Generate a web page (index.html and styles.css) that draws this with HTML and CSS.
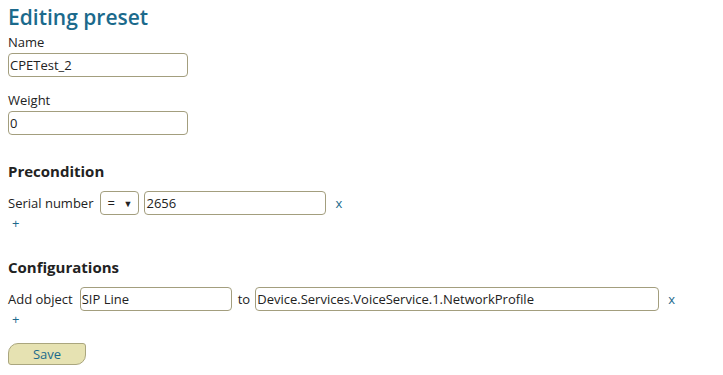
FILE: index.html
```html
<!DOCTYPE html>
<html lang="en">
  <head>
    <meta charset="UTF-8" />
    <title>Editing preset</title>
    <link rel="stylesheet" href="styles.css">
  </head>
  <body>
    <h1>Editing preset</h1>
    <form class="preset-form">
      <label class="field-label first" for="name">Name</label>
      <input class="text-input" id="name" type="text" value="CPETest_2" />
      <label class="field-label" for="weight">Weight</label>
      <input class="text-input" id="weight" type="text" value="0" />

      <h2>Precondition</h2>
      <div class="row">
        <span>Serial number</span>
        <span class="op-select">= <span class="caret">&#9660;</span></span>
        <input class="text-input value-input" type="text" value="2656" />
        <a class="remove">x</a>
      </div>
      <a class="add">+</a>

      <h2>Configurations</h2>
      <div class="row">
        <span>Add object</span>
        <input class="text-input object-input" type="text" value="SIP Line" />
        <span class="to">to</span>
        <input class="text-input path-input" type="text" value="Device.Services.VoiceService.1.NetworkProfile" />
        <a class="remove">x</a>
      </div>
      <a class="add">+</a>

      <button class="save" type="button">Save</button>
    </form>
  </body>
</html>
```

FILE: styles.css
```css
body {
  margin: 8px;
  font-family: "Open Sans", "Noto Sans", sans-serif;
  font-size: 13px;
  color: #222;
}

h1 {
  margin: 0;
  font-size: 21px;
  font-weight: 600;
  color: #1b6a8c;
  line-height: 18px;
}

h2 {
  margin: 26px 0 10px;
  font-size: 15px;
  font-weight: 700;
  line-height: 20px;
}

.preset-form {
  display: flex;
  flex-direction: column;
  align-items: flex-start;
}

.field-label {
  margin: 14px 0 2px;
  line-height: 18px;
}

.field-label.first {
  margin-top: 7px;
}

.text-input {
  box-sizing: border-box;
  width: 180px;
  height: 24px;
  margin: 0;
  padding: 0 1px;
  font: inherit;
  color: #222;
  border: 1px solid #a39e7e;
  border-radius: 4px;
}

.row {
  display: flex;
  align-items: center;
}

.op-select {
  box-sizing: border-box;
  width: 39px;
  height: 24px;
  margin-left: 7px;
  border: 1px solid #a39e7e;
  border-radius: 4px;
  padding: 0 6px;
  display: flex;
  align-items: center;
  justify-content: space-between;
}

.caret {
  font-size: 9px;
}

.row .value-input {
  width: 182px;
  margin-left: 5px;
}

.row .object-input {
  width: 152px;
  margin-left: 7px;
}

.to {
  margin-left: 6px;
}

.row .path-input {
  width: 404px;
  margin-left: 5px;
}

.remove {
  color: #1b6a8c;
  margin-left: 9px;
}

.add {
  color: #1b6a8c;
  padding-left: 4px;
  line-height: 16px;
}

.save {
  margin-top: 16px;
  width: 78px;
  height: 22px;
  padding: 0;
  font: inherit;
  color: #1b6a8c;
  background: #e6e2b2;
  border: 1px solid #aaa67e;
  border-radius: 10px 3px 10px 3px;
}
```
